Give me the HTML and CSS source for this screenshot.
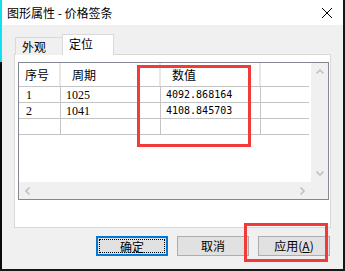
FILE: index.html
```html
<!DOCTYPE html>
<html lang="zh-CN">
<head>
<meta charset="UTF-8">
<title>图形属性 - 价格签条</title>
<link rel="stylesheet" href="styles.css">
</head>
<body>

<div class="screen">
    <div class="edge"></div>
    <div class="dialog">
        <div class="titlebar">
            <span class="title">图形属性 - 价格签条</span>
            <svg class="close" width="10" height="10" viewBox="0 0 10 10">
                <path d="M0 0L10 10M10 0L0 10" stroke="#000" stroke-width="1" fill="none"/>
            </svg>
        </div>

        <div class="tabs">
            <div class="tab">外观</div>
            <div class="tab active">定位</div>
        </div>

        <div class="panel">
            <div class="list">
                <div class="view">
                    <div class="row head">
                        <div class="cell c1">序号</div>
                        <div class="cell c2">周期</div>
                        <div class="cell c3">数值</div>
                        <div class="cell c4"></div>
                    </div>
                    <div class="row">
                        <div class="cell c1 serif">1</div>
                        <div class="cell c2 serif">1025</div>
                        <div class="cell c3 mono">4092.868164</div>
                        <div class="cell c4"></div>
                    </div>
                    <div class="row">
                        <div class="cell c1 serif">2</div>
                        <div class="cell c2 serif">1041</div>
                        <div class="cell c3 mono">4108.845703</div>
                        <div class="cell c4"></div>
                    </div>
                    <div class="row">
                        <div class="cell c1"></div>
                        <div class="cell c2"></div>
                        <div class="cell c3"></div>
                        <div class="cell c4"></div>
                    </div>
                </div>
                <div class="vscroll">
                    <div class="arrow">
                        <svg width="8" height="5" viewBox="0 0 8 5"><path d="M0.5 4.5L4 1L7.5 4.5" stroke="#c2c2c2" stroke-width="1.6" fill="none"/></svg>
                    </div>
                    <div class="arrow">
                        <svg width="8" height="5" viewBox="0 0 8 5"><path d="M0.5 0.5L4 4L7.5 0.5" stroke="#c2c2c2" stroke-width="1.6" fill="none"/></svg>
                    </div>
                </div>
                <div class="hscroll">
                    <div class="arrow">
                        <svg width="5" height="8" viewBox="0 0 5 8"><path d="M4.5 0.5L1 4L4.5 7.5" stroke="#c2c2c2" stroke-width="1.6" fill="none"/></svg>
                    </div>
                    <div class="arrow">
                        <svg width="5" height="8" viewBox="0 0 5 8"><path d="M0.5 0.5L4 4L0.5 7.5" stroke="#c2c2c2" stroke-width="1.6" fill="none"/></svg>
                    </div>
                </div>
                <div class="corner"></div>
            </div>
        </div>

        <div class="buttons">
            <div class="btn focused"><div class="focus">确定</div></div>
            <div class="btn">取消</div>
            <div class="btn">应用(<u>A</u>)</div>
        </div>
    </div>

    <div class="mark mark-values"></div>
    <div class="mark mark-apply"></div>
</div>

</body>
</html>
```

FILE: styles.css
```css
body {
    margin: 0;
    padding: 0;
    background-color: #161616;
    font-family: "Noto Sans CJK SC", "Liberation Sans", sans-serif;
    font-size: 12px;
    color: #000;
}

.screen {
    position: relative;
    display: flex;
    width: 345px;
    height: 271px;
}

.edge {
    width: 2px;
    height: 269px;
    background: linear-gradient(to bottom, #10e0f0 0, #10e0f0 62px, #0a0a0a 62px);
}

.dialog {
    width: 341px;
    height: 269px;
    background-color: #f0f0f0;
}

.titlebar {
    display: flex;
    align-items: center;
    justify-content: space-between;
    height: 25px;
    padding: 0 11px 0 5px;
    background-color: #fff;
}

.title {
    line-height: 14px;
}

/* tabs */

.tabs {
    display: flex;
    align-items: flex-end;
    height: 20px;
    margin: 10px 0 -1px 13px;
}

.tab {
    box-sizing: border-box;
    width: 47px;
    height: 18px;
    padding: 1px 0 0 6px;
    line-height: 16px;
    border: 1px solid #d9d9d9;
    border-bottom: none;
    border-right: none;
    background-color: #f0f0f0;
}

.tab.active {
    position: relative;
    z-index: 1;
    width: 52px;
    height: 21px;
    padding: 1px 0 0 6px;
    border-right: 1px solid #d9d9d9;
    background-color: #fff;
}

.panel {
    box-sizing: border-box;
    width: 317px;
    height: 174px;
    margin-left: 12px;
    padding: 7px 0 0 3px;
    background-color: #fff;
    border: 1px solid #d9d9d9;
}

/* list view */

.list {
    display: grid;
    grid-template-columns: 292px 17px;
    grid-template-rows: 119px 17px;
    width: 309px;
    border: 1px solid #828790;
}

.view {
    background-color: #fff;
    overflow: hidden;
}

.row {
    display: flex;
    height: 15px;
    width: 290px;
    border-bottom: 1px solid #c4c4c4;
}

.row.head {
    height: 23px;
}

.cell {
    box-sizing: border-box;
    border-right: 1px solid #c4c4c4;
    white-space: nowrap;
    padding-left: 5px;
    line-height: 16px;
}

.head .cell {
    border-right: 2px solid #e8e8e8;
    line-height: 23px;
    padding-left: 11px;
}

.head .c1 {
    padding-left: 6px;
}

.c1 { width: 42px; }
.c2 { width: 100px; }
.c3 { width: 100px; }
.c4 { width: 48px; border-right: none; }
.head .c4 { border-right: none; }

.serif {
    font-family: "Liberation Serif", serif;
    font-size: 12px;
}

.c1.serif {
    padding-left: 7px;
}

.mono {
    font-family: "DejaVu Sans Mono", monospace;
    font-size: 10px;
}

.vscroll {
    display: flex;
    flex-direction: column;
    justify-content: space-between;
    background-color: #f0f0f0;
}

.hscroll {
    display: flex;
    justify-content: space-between;
    background-color: #f0f0f0;
}

.arrow {
    display: flex;
    align-items: center;
    justify-content: center;
    width: 17px;
    height: 17px;
}

.corner {
    background-color: #f0f0f0;
}

/* buttons */

.buttons {
    display: flex;
    justify-content: flex-end;
    gap: 9px;
    margin-top: 8px;
    padding-right: 13px;
}

.btn {
    box-sizing: border-box;
    width: 72px;
    height: 20px;
    line-height: 18px;
    text-align: center;
    background-color: #e1e1e1;
    border: 1px solid #adadad;
}

.btn.focused {
    padding: 1px;
    border: 2px solid #0078d7;
}

.focus {
    box-sizing: border-box;
    height: 100%;
    line-height: 14px;
    border: 1px dotted #000;
}

/* red annotation boxes */

.mark {
    position: absolute;
    box-sizing: border-box;
    border: 3px solid #f23a3a;
}

.mark-values {
    left: 137px;
    top: 65px;
    width: 114px;
    height: 82px;
}

.mark-apply {
    left: 244px;
    top: 223px;
    width: 84px;
    height: 39px;
}
```
